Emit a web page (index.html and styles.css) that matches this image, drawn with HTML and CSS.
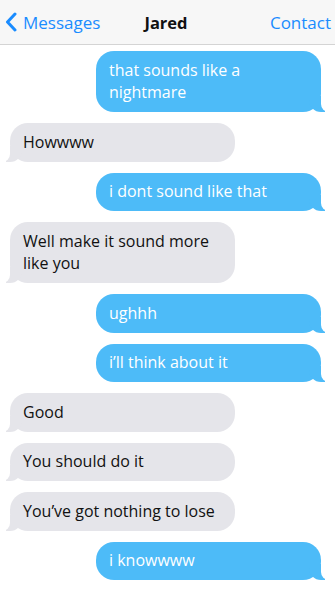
FILE: index.html
```html
<!DOCTYPE html>
<html>
<head>
<meta charset="utf-8">
<link rel="stylesheet" href="styles.css">
</head>
<body>
<header class="nav">
  <div class="nav-left">
    <svg class="chev" width="12" height="20" viewBox="0 0 12 20"><path d="M10 2 L2.5 10 L10 18" fill="none" stroke="#1a8cff" stroke-width="3" stroke-linecap="round" stroke-linejoin="round"/></svg>
    <span>Messages</span>
  </div>
  <div class="nav-title">Jared</div>
  <div class="nav-right">Contact</div>
</header>
<main class="thread">
  <div class="msg sent">that sounds like a nightmare</div>
  <div class="msg recv">Howwww</div>
  <div class="msg sent">i dont sound like that</div>
  <div class="msg recv">Well make it sound more like you</div>
  <div class="msg sent">ughhh</div>
  <div class="msg sent">i’ll think about it</div>
  <div class="msg recv">Good</div>
  <div class="msg recv">You should do it</div>
  <div class="msg recv">You’ve got nothing to lose</div>
  <div class="msg sent">i knowwww</div>
</main>
</body>
</html>
```
FILE: styles.css
```css
* { box-sizing: border-box; }
body {
  margin: 0;
  background: #fff;
  font-family: "Open Sans", "Noto Sans", sans-serif;
  overflow: hidden;
}
.nav {
  height: 45px;
  background: #f7f7f7;
  border-bottom: 1px solid #d4d4d4;
  display: grid;
  grid-template-columns: 1fr auto 1fr;
  align-items: center;
  padding: 0 4px 0 5px;
}
.nav-left {
  display: flex;
  align-items: center;
  gap: 6px;
  color: #1a8cff;
  font-size: 17px;
}
.chev { display: block; }
.nav-title {
  font-size: 16.5px;
  font-weight: 700;
  color: #111;
  margin-right: 4px;
}
.nav-right {
  justify-self: end;
  color: #1a8cff;
  font-size: 17px;
}
.thread {
  display: flex;
  flex-direction: column;
  gap: 11px;
  padding: 6px 14px 0 10px;
}
.msg {
  position: relative;
  width: 225px;
  padding: 7.5px 13px 8.5px;
  font-size: 16px;
  line-height: 22.5px;
  border-radius: 18px;
}
.sent {
  align-self: flex-end;
  background: #4dbbf8;
  color: #fff;
}
.recv {
  align-self: flex-start;
  background: #e5e5ea;
  color: #111;
}
.sent::before, .sent::after,
.recv::before, .recv::after {
  content: "";
  position: absolute;
  bottom: 0;
  height: 16px;
}
.sent::before {
  right: -4px;
  width: 16px;
  background: #4dbbf8;
  border-bottom-left-radius: 12px;
}
.sent::after {
  right: -10px;
  width: 10px;
  background: #fff;
  border-bottom-left-radius: 8px;
}
.recv::before {
  left: -4px;
  width: 16px;
  background: #e5e5ea;
  border-bottom-right-radius: 12px;
}
.recv::after {
  left: -10px;
  width: 10px;
  background: #fff;
  border-bottom-right-radius: 8px;
}
```
